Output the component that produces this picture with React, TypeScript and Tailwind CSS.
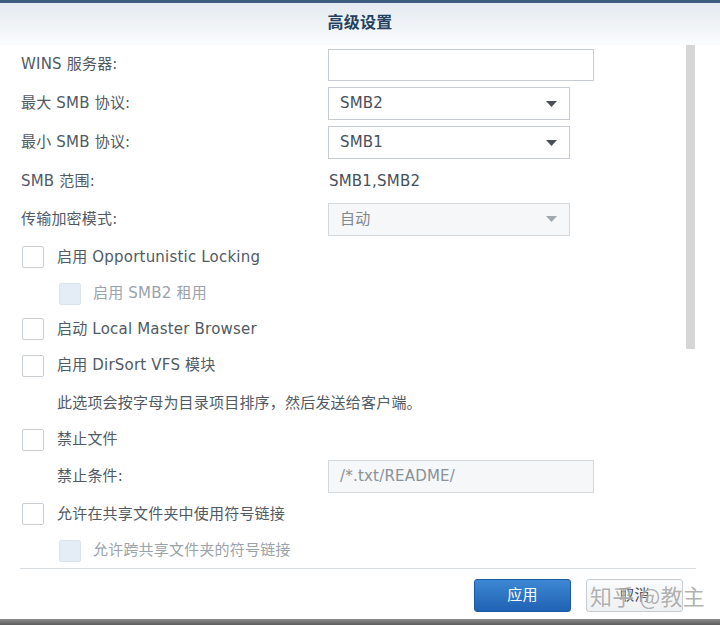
import React from "react";

const font = "font-['DejaVu_Sans','Noto_Sans_CJK_SC',sans-serif]";

function Caret({ disabled }: { disabled?: boolean }) {
  return (
    <svg width="11" height="6" viewBox="0 0 11 6" className="shrink-0">
      <path d="M0 0 L11 0 L5.5 6 Z" fill={disabled ? "#a2a8ae" : "#4a4f55"} />
    </svg>
  );
}

function Select({ value, disabled }: { value: string; disabled?: boolean }) {
  return (
    <div
      className={`w-[242px] h-[33px] border flex items-center justify-between pl-[11px] pr-[12px] ${
        disabled ? "bg-[#f5f7f8] border-[#d3d8dc] text-[#7f878f]" : "bg-white border-[#c6ccd2] text-[#46505a]"
      }`}
    >
      <span>{value}</span>
      <Caret disabled={disabled} />
    </div>
  );
}

function Checkbox({ disabled }: { disabled?: boolean }) {
  return (
    <div
      className={`w-[22px] h-[22px] rounded-[2px] border shrink-0 ${
        disabled ? "bg-[#e4ecf5] border-[#dbe3ec]" : "bg-white border-[#c9ced3]"
      }`}
    />
  );
}

function Row({ h, children }: { h: string; children: React.ReactNode }) {
  return <div className={`flex items-center ${h}`}>{children}</div>;
}

export default function App() {
  return (
    <div className={`relative w-[720px] h-[625px] bg-white flex flex-col text-[15px] tracking-[0.2px] text-[#505a64] ${font}`}>
      {/* header */}
      <div className="h-[3px] bg-[#3b5b80]" />
      <div className="h-[42px] bg-gradient-to-b from-[#e3eaf0] to-[#fbfcfd] flex items-center justify-center">
        <span className="text-[16px] font-bold text-[#23405e] -mt-[2px]">高级设置</span>
      </div>

      {/* body */}
      <div className="relative flex-1 flex flex-col pl-[21px]">
        <Row h="h-[39px]">
          <span className="w-[307px]">WINS 服务器:</span>
          <div className="w-[266px] h-[32px] border border-[#c6ccd2] bg-white" />
        </Row>
        <Row h="h-[39px]">
          <span className="w-[307px]">最大 SMB 协议:</span>
          <Select value="SMB2" />
        </Row>
        <Row h="h-[39px]">
          <span className="w-[307px]">最小 SMB 协议:</span>
          <Select value="SMB1" />
        </Row>
        <Row h="h-[38px]">
          <span className="w-[308px]">SMB 范围:</span>
          <span className="text-[#46505a]">SMB1,SMB2</span>
        </Row>
        <Row h="h-[38px]">
          <span className="w-[307px]">传输加密模式:</span>
          <Select value="自动" disabled />
        </Row>
        <Row h="h-[38px]">
          <div className="ml-[1px] flex items-center gap-[13px]">
            <Checkbox />
            <span>启用 Opportunistic Locking</span>
          </div>
        </Row>
        <Row h="h-[35px]">
          <div className="ml-[38px] flex items-center gap-[12px]">
            <Checkbox disabled />
            <span className="text-[#9aa2aa]">启用 SMB2 租用</span>
          </div>
        </Row>
        <Row h="h-[36px]">
          <div className="ml-[1px] flex items-center gap-[13px]">
            <Checkbox />
            <span>启动 Local Master Browser</span>
          </div>
        </Row>
        <Row h="h-[37px]">
          <div className="ml-[1px] flex items-center gap-[13px]">
            <Checkbox />
            <span>启用 DirSort VFS 模块</span>
          </div>
        </Row>
        <Row h="h-[38px]">
          <span className="ml-[36px]">此选项会按字母为目录项目排序，然后发送给客户端。</span>
        </Row>
        <Row h="h-[35px]">
          <div className="ml-[1px] flex items-center gap-[13px]">
            <Checkbox />
            <span>禁止文件</span>
          </div>
        </Row>
        <Row h="h-[38px]">
          <span className="ml-[36px] w-[271px]">禁止条件:</span>
          <div className="w-[266px] h-[33px] border border-[#d3d8dc] bg-[#f5f7f8] flex items-center pl-[11px] text-[#8a9199]">
            /*.txt/README/
          </div>
        </Row>
        <Row h="h-[38px]">
          <div className="ml-[1px] flex items-center gap-[13px]">
            <Checkbox />
            <span>允许在共享文件夹中使用符号链接</span>
          </div>
        </Row>
        <Row h="h-[35px]">
          <div className="ml-[38px] flex items-center gap-[12px]">
            <Checkbox disabled />
            <span className="text-[#9aa2aa]">允许跨共享文件夹的符号链接</span>
          </div>
        </Row>

        {/* scrollbar */}
        <div className="absolute right-[25px] top-0 w-[9px] h-[304px] bg-[#d6d6d6]" />
      </div>

      {/* footer */}
      <div className="mx-[20px] w-[676px] h-px bg-[#d8dde2]" />
      <div className="h-[50px] flex items-start justify-end gap-[15px] pt-[10px] pr-[37px]">
        <button className="w-[97px] h-[33px] rounded-[3px] border border-[#1c5aa4] bg-gradient-to-b from-[#3d88d4] to-[#1f62b3] text-white text-[15px]">
          应用
        </button>
        <button className="w-[97px] h-[33px] rounded-[3px] border border-[#c6cbd0] bg-gradient-to-b from-[#fafbfc] to-[#eef0f2] text-[#3f4850] text-[15px]">
          取消
        </button>
      </div>
      <div className="h-[6px] bg-gradient-to-b from-[#8a8a8a] to-[#5e5e5e]" />

      {/* watermark */}
      <span className="absolute left-[590px] top-[580px] text-[22px] leading-[30px] text-[#9c9c9c]/80 font-['Noto_Sans_CJK_SC',sans-serif] [text-shadow:0_0_2px_#fff]">
        知乎 @教主
      </span>
    </div>
  );
}
